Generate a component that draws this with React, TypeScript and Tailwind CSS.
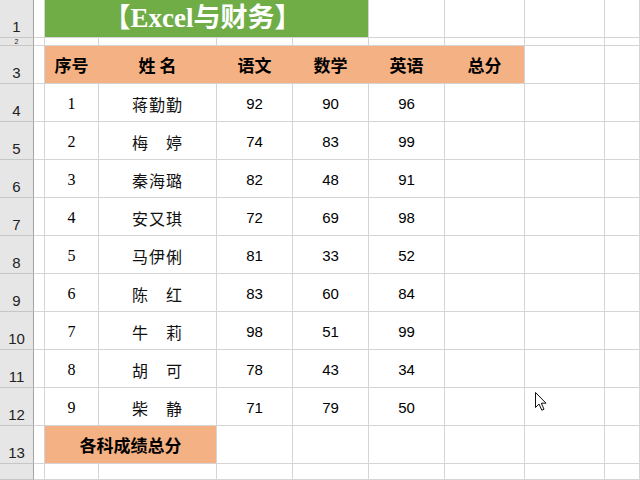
import React from 'react';

const rows = [
    ['1', '蒋勤勤', '92', '90', '96'],
    ['2', '梅　婷', '74', '83', '99'],
    ['3', '秦海璐', '82', '48', '91'],
    ['4', '安又琪', '72', '69', '98'],
    ['5', '马伊俐', '81', '33', '52'],
    ['6', '陈　红', '83', '60', '84'],
    ['7', '牛　莉', '98', '51', '99'],
    ['8', '胡　可', '78', '43', '34'],
    ['9', '柴　静', '71', '79', '50'],
];

const cjk = "font-['Noto_Sans_CJK_SC',sans-serif]";
const serif = "font-['Liberation_Serif','Noto_Sans_CJK_SC',serif]";
const sans = "font-['Liberation_Sans',Arial,sans-serif]";

const Cell: React.FC<{ className?: string; children?: React.ReactNode }> = ({ className = '', children }) => (
    <div className={`flex items-center justify-center overflow-hidden border-r border-b border-[#d4d4d4] ${className}`}>
        {children}
    </div>
);

const RowHead: React.FC<{ n?: string; small?: boolean }> = ({ n, small }) => (
    <div
        className={`flex items-end justify-center overflow-hidden bg-[#e6e6e6] border-r border-r-[#a3a3a3] border-b border-b-[#c6c6c6] text-[#222] ${sans} ${
            small ? 'text-[7px] leading-[7px]' : 'pb-[1px] text-[15px] leading-[18px]'
        }`}
    >
        {n}
    </div>
);

const Blank = ({ count }: { count: number }) => (
    <>
        {Array.from({ length: count }).map((_, i) => (
            <Cell key={i} />
        ))}
    </>
);

const Cursor = () => (
    <svg className="absolute left-[535px] top-[392px]" width="13" height="20" viewBox="0 0 13 20">
        <path d="M0.5 0.5 L0.5 15.5 L4 12 L6.8 18.2 L9 17.2 L6.3 11.2 L11 11.2 Z" fill="#fff" stroke="#111" strokeWidth="1" strokeLinejoin="round" />
    </svg>
);

export default function App() {
    const head = ['序号', '姓 名', '语文', '数学', '英语', '总分'];

    return (
        <div className="relative w-[640px] h-[480px] overflow-hidden bg-white">
            <div className="grid h-full grid-cols-[34px_11px_54px_118px_76px_76px_76px_80px_80px_1fr] grid-rows-[38px_8px_repeat(11,38px)_1fr]">
                {/* row 1 */}
                <RowHead n="1" />
                <Cell />
                <Cell className={`col-span-4 bg-[#70ad47] pr-2 text-[27px] leading-none font-bold text-white ${serif}`}>
                    【Excel与财务】
                </Cell>
                <Blank count={4} />

                {/* row 2 */}
                <RowHead n="2" small />
                <Blank count={9} />

                {/* row 3 */}
                <RowHead n="3" />
                <Cell />
                {head.map((h, i) => (
                    <Cell
                        key={h}
                        className={`bg-[#f4b183] text-[17px] font-bold text-black ${cjk} ${i < head.length - 1 ? 'border-r-[#f4b183]' : ''}`}
                    >
                        {h}
                    </Cell>
                ))}
                <Blank count={2} />

                {/* data */}
                {rows.map((r, idx) => (
                    <React.Fragment key={r[0]}>
                        <RowHead n={String(idx + 4)} />
                        <Cell />
                        <Cell className={`pt-[3px] text-[16px] text-black ${serif}`}>{r[0]}</Cell>
                        <Cell className={`pt-[2px] text-[16px] tracking-[1px] text-[#111] ${cjk}`}>{r[1]}</Cell>
                        <Cell className={`pt-[4px] text-[15px] text-black ${sans}`}>{r[2]}</Cell>
                        <Cell className={`pt-[4px] text-[15px] text-black ${sans}`}>{r[3]}</Cell>
                        <Cell className={`pt-[4px] text-[15px] text-black ${sans}`}>{r[4]}</Cell>
                        <Blank count={3} />
                    </React.Fragment>
                ))}

                {/* row 13 */}
                <RowHead n="13" />
                <Cell />
                <Cell className={`col-span-2 bg-[#f4b183] text-[17px] font-bold text-black ${cjk}`}>各科成绩总分</Cell>
                <Blank count={6} />

                {/* row 14 */}
                <RowHead />
                <Blank count={9} />
            </div>
            <Cursor />
        </div>
    );
}
